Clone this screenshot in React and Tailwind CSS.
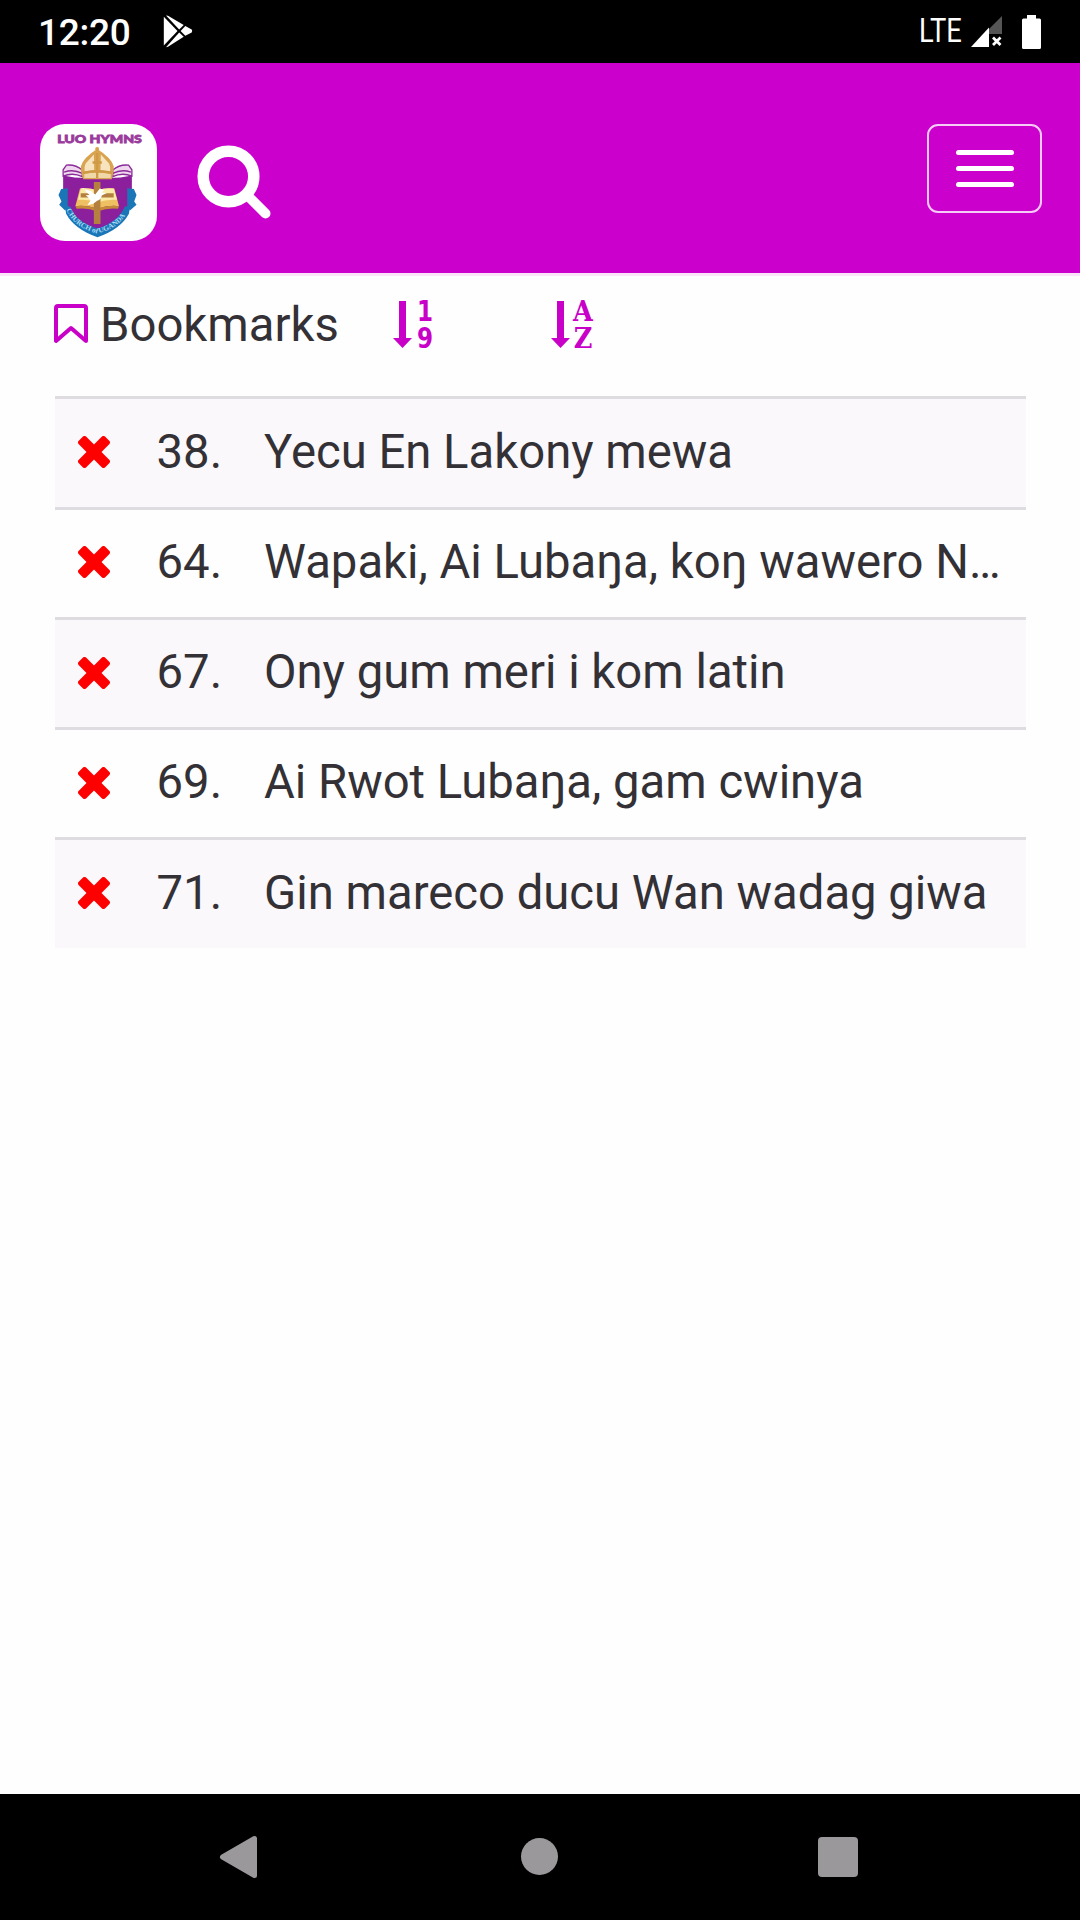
import clsx from 'clsx';

const HYMNS = [
  { number: 38, title: 'Yecu En Lakony mewa' },
  { number: 64, title: 'Wapaki, Ai Lubaŋa, koŋ wawero N…' },
  { number: 67, title: 'Ony gum meri i kom latin' },
  { number: 69, title: 'Ai Rwot Lubaŋa, gam cwinya' },
  { number: 71, title: 'Gin mareco ducu Wan wadag giwa' },
];

function StatusBar() {
  return (
    <div className="flex h-[63px] shrink-0 items-center justify-between bg-black pr-[39px] pl-[38px] text-white">
      <div className="flex items-center">
        <span className="pt-[2px] text-[37px] leading-none font-medium tracking-[-0.3px]">12:20</span>
        <svg className="ml-[33px] h-[34px] w-[31px]" viewBox="0 0 31 34" fill="white" aria-hidden="true">
          <path d="M.8 1.8 14.5 16 .8 30.5Z" />
          <path d="M3 .4 5 .8 20.7 10 16.2 14.6Z" />
          <path d="M3 32.2 5 31.8 20.7 21.8 16.2 17.6Z" />
          <path d="M22.3 11 28.7 14.6q1 1.3 0 2.8L22.3 20.8 17.6 16Z" />
        </svg>
      </div>

      <div className="flex items-center">
        <span className="w-[52px] origin-left scale-x-[0.84] text-[32.500px] leading-none">LTE</span>
        <svg className="h-[34px] w-[32px]" viewBox="0 0 32 34" aria-hidden="true">
          <path d="M31 1v18H18v-5Z" fill="#555" />
          <path d="M18 12.5V32H0Z" fill="white" />
          <path d="m22 22.500 7.500 7.500m0-7.500L22 30" stroke="white" strokeWidth="2.800" />
        </svg>
        <svg className="ml-[19px] h-[34px] w-[19px]" viewBox="0 0 19 34" fill="white" aria-hidden="true">
          <path d="M5 0h9v3.500h3.500q1.500 0 1.500 1.500v27.500q0 1.500-1.500 1.500h-16Q0 34 0 32.500V5q0-1.500 1.500-1.500H5Z" />
        </svg>
      </div>
    </div>
  );
}

function Logo() {
  return (
    <div className="size-[117px] overflow-hidden rounded-[25px] bg-white">
      <svg className="size-full" viewBox="28 25 354 353" aria-label="Luo Hymns">
        <text
          x="80"
          y="82"
          fontFamily="Lato"
          fontWeight="900"
          fontSize="34"
          fill="#9a3a9c"
          stroke="#9a3a9c"
          strokeWidth="2.500"
          textLength="256"
          lengthAdjust="spacingAndGlyphs"
        >
          LUO HYMNS
        </text>

        {/* shield */}
        <path d="M98 180Q150 192 202 186q52 6 104-6v58q-2 78-104 124Q100 318 98 238Z" fill="#8c1f9c" />
        {/* open pages */}
        <g fill="#efd8ee" stroke="#8b2a98" strokeWidth="4">
          <path d="M98 182v-19l10-14q27-3 48 15v20q-28-14-58-2Z" />
          <path d="M306 182v-19l-10-14q-27-3-48 15v20q28-14 58-2Z" />
          <path d="M101 170q28-10 55 4M303 170q-28-10-55 4" fill="none" />
        </g>

        {/* mitre */}
        <path d="M201 100q42 26 50 52 1 15-6 40h-86q-9-24-7-40 7-26 49-52Z" fill="#d8a450" />
        <path d="m191 117-25 27q-5 9-3 25l29-5ZM212 117l25 27q5 9 3 25l-29-5Z" fill="#f7e3bd" />
        <path d="M162 176q38-8 80 0v12h-80Z" fill="#f1d8a8" />
        <path d="M201 112v76M187 141h28M158 172q43-10 87 0" fill="none" stroke="#cf9a45" strokeWidth="7" />
        <circle cx="201" cy="100" r="6" fill="#d9a24b" />

        {/* bible with the cross over it */}
        <path d="m149 220-14 53q36-4 66 9 34-13 66-9l-14-53q-26-3-52 5-27-8-52-5Z" fill="#efc062" />
        <path d="m152 220-9 34q32-3 58 8 30-11 60-8l-10-34q-25-3-50 5-25-8-49-5Z" fill="#fbeaa8" />
        <path d="m135 273 4 8q34-4 62 8 34-12 63-8l3-8q-36-4-66 9-30-13-66-9Z" fill="#c48a35" />
        <path d="M191 200h20v34h40v13h-40v80h-20v-80h-40v-13h40Z" fill="#b5803f" />
        {/* dove */}
        <path
          d="m151 219 31 8 13 11 14-18 14 5-10 7 17 1-15 8q-2 13-14 16l-12 9-18 4 10-14q-6-11-15-16l12-1q-12-7-17-20Z"
          fill="white"
        />

        {/* ribbon */}
        <g fill="#1b76b8">
          <path d="m92 221 20-2v55l-8 12-18-17 7-10-9-20Z" />
          <path d="m312 221-20-2v55l8 12 20-17-7-10 7-20Z" />
          <path d="m103 270 17 5q16 45 82 66 64-21 82-66l17-5-4 26q-25 47-95 71-70-24-95-71Z" />
        </g>
        <path id="ribbon-line" d="M108 284Q130 337 202 356 276 336 296 282" fill="none" />
        <text fontFamily="Liberation Serif" fontWeight="700" fontSize="22" fill="#a9dcf3">
          <textPath href="#ribbon-line" textLength="226" lengthAdjust="spacingAndGlyphs">
            CHURCH of UGANDA
          </textPath>
        </text>
      </svg>
    </div>
  );
}

function Header() {
  return (
    <header className="flex h-[213px] shrink-0 items-start justify-between border-b-[3px] border-[#fbe3fb] bg-[#cc00cc] pt-[61px] pr-[38px] pl-[40px]">
      <div className="flex items-start">
        <Logo />
        <button type="button" className="mt-[21px] ml-[40px]" aria-label="Search">
          <svg className="size-[75px]" viewBox="0 0 75 75" fill="none" stroke="white" aria-hidden="true">
            <circle cx="31.500" cy="31.500" r="25.300" strokeWidth="11.500" />
            <path d="m51 51 17.500 17.500" strokeWidth="10" strokeLinecap="round" />
          </svg>
        </button>
      </div>
      <button
        type="button"
        className="flex h-[89px] w-[115px] flex-col items-center justify-center gap-[11px] rounded-[11px] border-2 border-[#f5ccf5]"
        aria-label="Toggle menu"
      >
        <span className="h-[5px] w-[58px] rounded-full bg-white" />
        <span className="h-[5px] w-[58px] rounded-full bg-white" />
        <span className="h-[5px] w-[58px] rounded-full bg-white" />
      </button>
    </header>
  );
}

function SortIcon({ top, bottom, family, width }) {
  return (
    <svg className="h-[50px] w-[42px] overflow-visible" viewBox="0 0 42 50" fill="#c800c8" aria-hidden="true">
      <path d="M6 1h7v37h6L9.500 48 0 38h6Z" />
      <g fontFamily={family} fontWeight="700" fontSize="27.500" textAnchor="middle">
        <text transform={`translate(32 21) scale(${width} 1)`}>{top}</text>
        <text transform={`translate(32 48) scale(${width} 1)`}>{bottom}</text>
      </g>
    </svg>
  );
}

function Toolbar() {
  return (
    <div className="flex h-[120px] items-start pl-[54px]">
      <svg className="mt-[28px] h-[40px] w-[34px]" viewBox="0 0 34 40" fill="none" aria-hidden="true">
        <path d="M2 37V4q0-2 2-2h26q2 0 2 2v33L17 24Z" stroke="#c800c8" strokeWidth="4" strokeLinejoin="round" />
      </svg>
      <h1 className="ml-[12px] w-[293px] pt-[24px] text-[47.250px] leading-[50px]">Bookmarks</h1>
      <button type="button" className="mt-[24px]" aria-label="Sort by number">
        <SortIcon top="1" bottom="9" family="DejaVu Sans" width={0.84} />
      </button>
      <button type="button" className="mt-[24px] ml-[116px]" aria-label="Sort by title">
        <SortIcon top="A" bottom="Z" family="DejaVu Serif" width={0.93} />
      </button>
    </div>
  );
}

function RemoveIcon() {
  return (
    <svg className="size-[32px]" viewBox="-16 -16 32 32" fill="#ff0000" aria-hidden="true">
      <rect x="-18.700" y="-5.300" width="37.400" height="10.600" rx="2.500" transform="rotate(45)" />
      <rect x="-18.700" y="-5.300" width="37.400" height="10.600" rx="2.500" transform="rotate(-45)" />
    </svg>
  );
}

function HymnRow({ hymn, striped }) {
  return (
    <li
      className={clsx(
        'flex h-[110.250px] items-center border-t-[3px] border-[#dedce0] pb-[2px] pl-[22.500px] text-[47.250px]',
        striped && 'bg-[#faf8fb]',
      )}
    >
      <button type="button" aria-label="Remove bookmark">
        <RemoveIcon />
      </button>
      <span className="ml-[47px] w-[107.500px] shrink-0">{hymn.number}.</span>
      <span className="min-w-0 flex-1 whitespace-nowrap">{hymn.title}</span>
    </li>
  );
}

function NavigationBar() {
  return (
    <nav className="flex h-[126px] shrink-0 items-center bg-black pl-[219px]">
      <svg className="h-[44px] w-[39px]" viewBox="0 0 39 44" fill="#9a989b" aria-hidden="true">
        <path d="M3.500 22 35.500 3.500v37Z" stroke="#9a989b" strokeWidth="5" strokeLinejoin="round" />
      </svg>
      <span className="mb-px ml-[263px] size-[37px] rounded-full bg-[#9a989b]" />
      <span className="ml-[260px] size-[40px] rounded-[4px] bg-[#9a989b]" />
    </nav>
  );
}

export default function App() {
  return (
    <div className="flex h-[1920px] w-[1080px] flex-col overflow-hidden bg-[#fefefe] font-['Roboto',sans-serif] text-[#333135]">
      <StatusBar />
      <Header />
      <main className="flex-1">
        <Toolbar />
        <ul className="mr-[54px] ml-[55px] pt-[0.400px]">
          {HYMNS.map((hymn, i) => (
            <HymnRow key={hymn.number} hymn={hymn} striped={i % 2 === 0} />
          ))}
        </ul>
      </main>
      <NavigationBar />
    </div>
  );
}
